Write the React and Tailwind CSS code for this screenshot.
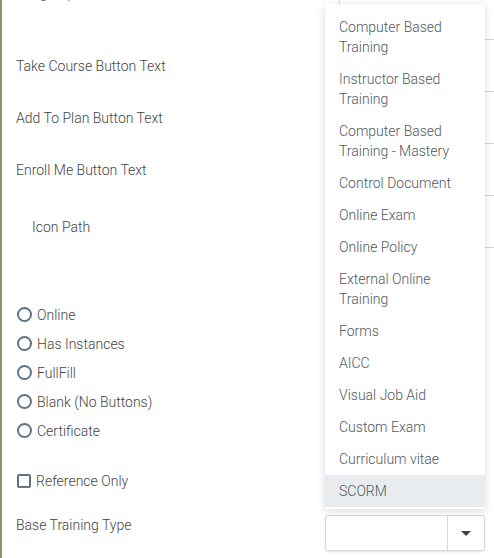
import React from "react";

const font = { fontFamily: "Roboto, 'Noto Sans', sans-serif" };

const items = [
  "Computer Based Training",
  "Instructor Based Training",
  "Computer Based Training - Mastery",
  "Control Document",
  "Online Exam",
  "Online Policy",
  "External Online Training",
  "Forms",
  "AICC",
  "Visual Job Aid",
  "Custom Exam",
  "Curriculum vitae",
  "SCORM",
];

function Row({ label, indent }) {
  return (
    <div className="flex h-[52px]">
      <div className={`flex-1 flex items-center ${indent ? "pl-[30px] pt-[10px]" : "pl-[14px]"}`}>
        <span>{label}</span>
      </div>
      <div className="w-[155px] border-b border-[#cdd5db]" />
    </div>
  );
}

function Radio({ label }) {
  return (
    <div className="flex items-center h-[29px] pl-[15px] gap-[5px]">
      <span className="w-[15px] h-[15px] rounded-full border-2 border-[#5d7585] bg-white" />
      <span>{label}</span>
    </div>
  );
}

export default function App() {
  return (
    <div
      style={font}
      className="relative w-[494px] h-[558px] overflow-hidden bg-white border-l-2 border-[#8c9072] text-[14px] leading-5 font-light text-[#444]"
    >
      <div className="flex h-[40px]">
        <div className="flex-1 pl-[14px]">
          <div className="-mt-[17px]">Image Upload</div>
        </div>
        <div className="w-[155px] border-b border-[#cdd5db] flex flex-col">
          <div className="h-[5px] border-l border-[#cdd5db]" />
        </div>
      </div>
      <Row label="Take Course Button Text" />
      <Row label="Add To Plan Button Text" />
      <Row label="Enroll Me Button Text" />
      <Row label="Icon Path" indent />

      <div className="pt-[52px] flex flex-col">
        <Radio label="Online" />
        <Radio label="Has Instances" />
        <Radio label="FullFill" />
        <Radio label="Blank (No Buttons)" />
        <Radio label="Certificate" />
      </div>

      <div className="mt-[21px] flex items-center h-[29px] pl-[15px] gap-[5px]">
        <span className="w-[14px] h-[14px] rounded-[2px] border-2 border-[#5d7585] bg-white" />
        <span>Reference Only</span>
      </div>

      <div className="mt-[20px] flex">
        <div className="flex-1 pl-[14px] pt-0">Base Training Type</div>
        <div className="w-[160px] h-[36px] mr-[9px] border border-[#d3d9de] rounded-[3px] shadow-[0_1px_2px_rgba(0,0,0,0.12)] flex">
          <div className="flex-1" />
          <div className="w-[37px] border-l border-[#d3d9de] flex items-center justify-center">
            <svg width="10" height="5" viewBox="0 0 10 5">
              <path d="M0 0 L10 0 L5 5 Z" fill="#444" />
            </svg>
          </div>
        </div>
      </div>

      <div className="absolute left-[323px] top-[4px] w-[160px] bg-white pt-[7px] pb-[2px] shadow-[0_2px_8px_rgba(0,0,0,0.15)] rounded-[2px] text-[#4f5860]">
        {items.map((it) => (
          <div
            key={it}
            className={`px-[14px] py-[6px] leading-5 ${it === "SCORM" ? "bg-[#e8ecef]" : ""}`}
          >
            {it}
          </div>
        ))}
      </div>
    </div>
  );
}
